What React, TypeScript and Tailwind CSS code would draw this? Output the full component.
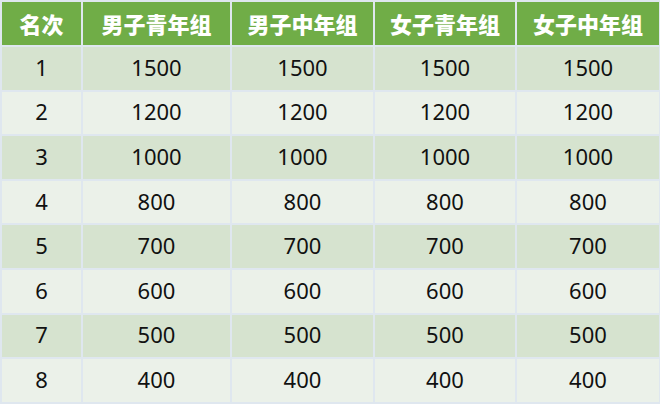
const headers = ["名次", "男子青年组", "男子中年组", "女子青年组", "女子中年组"];
const points = [1500, 1200, 1000, 800, 700, 600, 500, 400];

export default function App() {
  return (
    <div className="w-[660px] h-[408px] bg-white">
      <table
        className="w-[659px] border-collapse table-fixed text-center"
        style={{ fontFamily: '"Noto Sans", "Noto Sans CJK SC", sans-serif' }}
      >
        <colgroup>
          <col className="w-[81px]" />
          <col className="w-[149px]" />
          <col className="w-[143px]" />
          <col className="w-[142px]" />
          <col className="w-[144px]" />
        </colgroup>
        <thead>
          <tr className="h-[45px] bg-[#70ad47]">
            {headers.map((h) => (
              <th
                key={h}
                className="border-2 border-[#dfe7ef] p-0 text-[22px] font-extrabold text-white"
                style={{ fontFamily: '"Noto Sans CJK SC", sans-serif' }}
              >
                {h}
              </th>
            ))}
          </tr>
        </thead>
        <tbody>
          {points.map((p, i) => (
            <tr
              key={i}
              className={`h-[44.6px] ${i % 2 === 0 ? "bg-[#d6e3cf]" : "bg-[#ebf1e9]"}`}
            >
              <td className="border-2 border-[#dfe7ef] p-0 pb-[2px] text-[22px] text-[#111]">{i + 1}</td>
              {[0, 1, 2, 3].map((c) => (
                <td key={c} className="border-2 border-[#dfe7ef] p-0 pb-[2px] text-[22px] text-[#111]">
                  {p}
                </td>
              ))}
            </tr>
          ))}
        </tbody>
      </table>
    </div>
  );
}
